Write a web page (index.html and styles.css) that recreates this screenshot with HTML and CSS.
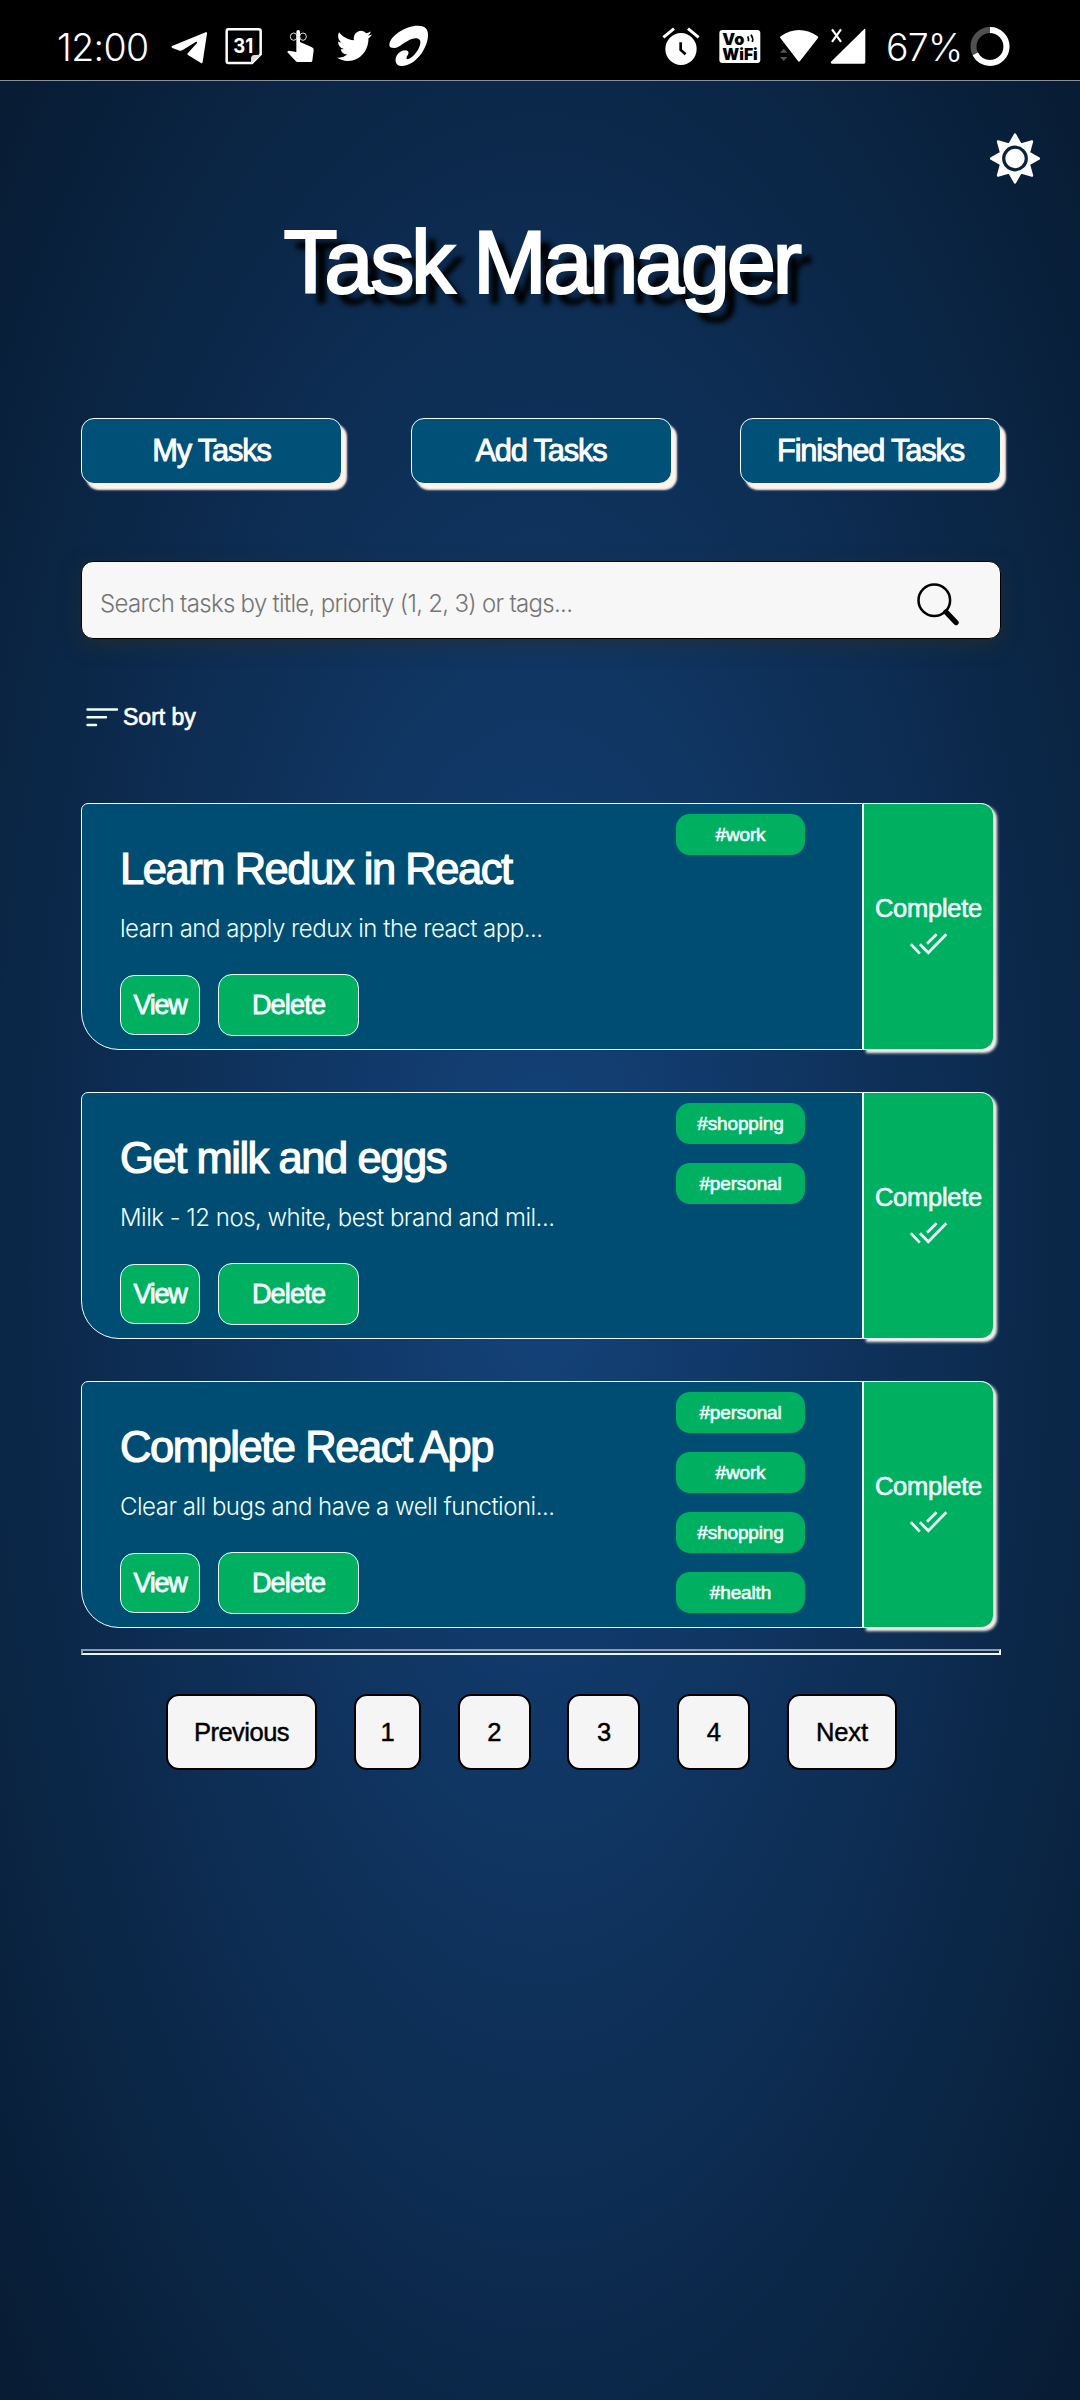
FILE: index.html
```html
<!DOCTYPE html>
<html lang="en">
<head>
<meta charset="utf-8">
<title>Task Manager</title>
<link rel="stylesheet" href="styles.css">
</head>
<body>
<svg width="0" height="0" class="defs" aria-hidden="true">
  <symbol id="done-all" viewBox="0 0 38 23"><path d="M.9 11.2 9.8 20.6M10 11.2l8.3 8.6L36.3 1.2M17 10.8l9.6-9.6" fill="none" stroke="#f0ffff" stroke-width="2.7"/></symbol>
</svg>

<div class="status">
  <div class="status-group">
    <span class="clock">12:00</span>
    <svg class="i-telegram" viewBox="32 12 111 130" width="37" height="43.3"><path d="M35 78 136 37q5-2 4 4l-13 85q-1 5-5 3L84 106q-5-3-1-7l27-30q3-6-4-3L66 91q-4 2-8 1L36 84q-5-3-1-6z" fill="#fff"/></svg>
    <svg class="i-calendar" viewBox="196 12 111 130" width="37" height="43.3"><path d="M206 28h91q6 0 6 6v69l-26 26h-71q-5 0-5-5V33q0-5 5-5z" fill="none" stroke="#fff" stroke-width="7.500"/><path d="M274 130v-14q0-11 11-11h19z" fill="#ddd"/><text x="221" y="100" class="cal-text" textLength="60" lengthAdjust="spacingAndGlyphs">31</text></svg>
    <svg class="i-hand" viewBox="378 12 86 130" width="28.7" height="43.3"><path d="M409 36q0-6 5.500-6t5.500 6v30l36 16q6 3 5 9l-4 31q-1 4-4 4h-40q-4 0-6-3l-22-23q-6-6 1-8l23 4z" fill="#fff"/><ellipse cx="401" cy="50" rx="10" ry="11" fill="none" stroke="#ddd" stroke-width="3"/><ellipse cx="429" cy="50" rx="10" ry="11" fill="none" stroke="#ddd" stroke-width="3"/></svg>
    <svg class="i-bird" viewBox="528 12 110 130" width="36.700" height="43.3"><path transform="translate(530 22) scale(4.42 4.65)" fill="#fff" d="M23.950 4.570a10 10 0 01-2.820.770 4.960 4.960 0 002.160-2.720c-.950.560-2 .960-3.130 1.180a4.920 4.920 0 00-8.380 4.480C7.690 8.100 4.070 6.130 1.640 3.160a4.820 4.820 0 00-.670 2.480c0 1.710.870 3.210 2.190 4.100a4.900 4.900 0 01-2.230-.620v.060a4.920 4.920 0 003.950 4.830 5 5 0 01-2.210.080 4.940 4.940 0 004.600 3.420A9.870 9.870 0 010 19.540a13.990 13.990 0 007.550 2.210c9.060 0 14-7.500 14-13.980 0-.210 0-.420-.020-.630a9.940 9.940 0 002.460-2.550z"/></svg>
    <svg class="i-swirl" viewBox="684 12 122 130" width="40.700" height="43.3"><path fill="#fff" d="M688 74C690 48 735 17 774 17c25 0 31 13 30 32-2 34-34 88-79 89-20 0-22-20-14-33 8-12 26-18 33-11 6 8-7 16-4 22 5 8 37-18 41-46 2-15-11-18-26-13-20 7-38 27-52 27-11 0-16-4-15-10z"/></svg>
  </div>
  <div class="status-group">
    <svg class="i-alarm" viewBox="38 12 114 130" width="38" height="43.3"><ellipse cx="95" cy="87" rx="47" ry="48" fill="#fff"/><path d="m42 52 32-26M116 26l32 26" stroke="#fff" stroke-width="9"/><path d="M94 67v23l15 13" fill="none" stroke="#000" stroke-width="8"/></svg>
    <svg class="i-vowifi" viewBox="210 12 126 130" width="42" height="43.3"><rect x="211" y="30" width="123" height="99" rx="9" fill="#fff"/><text x="220" y="75" class="vo-text" textLength="66" lengthAdjust="spacingAndGlyphs">Vo</text><text x="220" y="119" class="vo-text" textLength="106" lengthAdjust="spacingAndGlyphs">WiFi</text><path d="M296 49q4 8 2 15M306 44q8 11 4 22" fill="none" stroke="#000" stroke-width="5"/></svg>
    <svg class="i-wifi" viewBox="388 12 122 130" width="40.700" height="43.3"><path d="M392 54q-2-3 1-5 55-38 111 0 3 2 1 5l-54 69q-3 4-6 0z" fill="#fff"/><path d="m402 86 11 12h-22zM391 111h22l-11 12z" fill="#555"/></svg>
    <svg class="i-signal" viewBox="544 12 110 130" width="36.700" height="43.3"><path d="M547 125 647 27q3-2 3 2v98q0 4-4 4h-96q-6-1-3-6z" fill="#fff"/><path d="m550 28 27 38M577 28l-27 38" stroke="#fff" stroke-width="6.500"/></svg>
    <span class="battery">67%</span>
    <svg class="i-ring" viewBox="0 0 41 43.3" width="41" height="43.3"><circle cx="20" cy="22.500" r="16.500" fill="none" stroke="#505050" stroke-width="6"/><circle cx="20" cy="22.500" r="16.500" fill="none" stroke="#fff" stroke-width="6" pathLength="100" stroke-dasharray="67.500 100" transform="rotate(-90 20 22.500)"/></svg>
  </div>
</div>

<div class="theme-row">
  <svg viewBox="0 0 50 51" width="50" height="51"><path d="M49 25.500 38.900 31.200 42 42.500 30.700 39.400 25 49.500 19.300 39.400 8 42.500 11.100 31.200 1 25.500 11.100 19.800 8 8.500 19.300 11.600 25 1.500 30.700 11.600 42 8.500 38.900 19.800z" fill="#fff" stroke="#fff" stroke-width="2.400" stroke-linejoin="round"/><circle cx="25" cy="25.500" r="11.300" fill="#fff" stroke="#09223d" stroke-width="3.200"/></svg>
</div>

<main class="page">
  <h1 class="title">Task Manager</h1>

  <nav class="tabs">
    <button class="tab">My Tasks</button>
    <button class="tab">Add Tasks</button>
    <button class="tab">Finished Tasks</button>
  </nav>

  <div class="search">
    <span class="placeholder">Search tasks by title, priority (1, 2, 3) or tags...</span>
    <svg viewBox="0 0 44 44" width="44" height="44"><circle cx="18.300" cy="18.300" r="15.800" fill="none" stroke="#000" stroke-width="2.500"/><path d="m30 30 10 10.500" stroke="#000" stroke-width="5.400" stroke-linecap="round"/></svg>
  </div>

  <div class="sort">
    <svg viewBox="0 0 33 20" width="33" height="20"><path d="M1.500 2.500h29.500M1.500 10.200h18.500M1.500 18h8.500" stroke="#f0ffff" stroke-width="2.400" stroke-linecap="round"/></svg>
    <span>Sort by</span>
  </div>

  <section class="tasks">
    <article class="card">
      <div class="body">
        <div class="info">
          <h2>Learn Redux in React</h2>
          <p>learn and apply redux in the react app...</p>
          <div class="actions"><button class="view">View</button><button class="delete">Delete</button></div>
        </div>
        <div class="tags"><span>#work</span></div>
      </div>
      <button class="complete">Complete<svg width="38" height="23"><use href="#done-all"/></svg></button>
    </article>
    <article class="card">
      <div class="body">
        <div class="info">
          <h2>Get milk and eggs</h2>
          <p>Milk - 12 nos, white, best brand and mil...</p>
          <div class="actions"><button class="view">View</button><button class="delete">Delete</button></div>
        </div>
        <div class="tags"><span>#shopping</span><span>#personal</span></div>
      </div>
      <button class="complete">Complete<svg width="38" height="23"><use href="#done-all"/></svg></button>
    </article>
    <article class="card">
      <div class="body">
        <div class="info">
          <h2>Complete React App</h2>
          <p>Clear all bugs and have a well functioni...</p>
          <div class="actions"><button class="view">View</button><button class="delete">Delete</button></div>
        </div>
        <div class="tags"><span>#personal</span><span>#work</span><span>#shopping</span><span>#health</span></div>
      </div>
      <button class="complete">Complete<svg width="38" height="23"><use href="#done-all"/></svg></button>
    </article>
  </section>

  <hr class="rule">

  <div class="pager">
    <button class="prev">Previous</button>
    <button class="first">1</button>
    <button>2</button>
    <button>3</button>
    <button>4</button>
    <button class="next">Next</button>
  </div>
</main>
</body>
</html>
```
FILE: styles.css
```css
* { box-sizing: border-box; }

body {
  margin: 0;
  width: 1080px;
  height: 2400px;
  overflow: hidden;
  background: radial-gradient(ellipse farthest-corner at 540px 1240px, #14437b, #071a30);
  color: #fff;
  font-family: "Liberation Sans", Arial, sans-serif;
}

.defs { display: block; }

button {
  margin: 0;
  padding: 0;
  font: inherit;
  letter-spacing: inherit;
  color: inherit;
  background: none;
  border: 0;
}

/* Status bar */
.status {
  display: flex;
  justify-content: space-between;
  height: 81px;
  padding: 24px 69px 0 56px;
  background: #000;
  border-bottom: 1px solid #8492a3;
}
.status-group { display: flex; height: 43px; }
.status-group svg { display: block; flex: none; }
.clock, .battery {
  font: 300 37.5px/44px "Inter", sans-serif;
  flex: none;
  white-space: nowrap;
}
.clock { width: 114.7px; letter-spacing: -.6px; padding: 2px 0 0 1px; }
.battery { width: 86px; letter-spacing: -.8px; padding: 2px 0 0 2px; }
.i-calendar { margin-left: 17.6px; }
.i-hand { margin-left: 23.7px; }
.i-bird { margin-left: 21.3px; }
.i-swirl { margin-left: 15.3px; }
.i-vowifi { margin-left: 19.3px; }
.i-wifi { margin-left: 17.3px; }
.i-signal { margin: 0 17px 0 11px; }
.cal-text { font: 700 60px "Inter", sans-serif; fill: #fff; }
.vo-text { font: 900 48px "Inter", sans-serif; fill: #000; }

.theme-row {
  display: flex;
  justify-content: flex-end;
  height: 103px;
  padding: 52px 40px 0 0;
}

/* Page */
.page { padding: 28px 79px 0 81px; }

.title {
  margin: 0;
  text-align: center;
  font-weight: 400;
  font-size: 88.5px;
  line-height: 102px;
  height: 100px;
  letter-spacing: -3.4px;
  white-space: nowrap;
  -webkit-text-stroke: 2.2px #fff;
  text-shadow: 11px 11px 5px #000;
}

.tabs {
  display: flex;
  justify-content: space-between;
  margin-top: 106px;
}
.tab {
  width: 261px;
  height: 65.5px;
  border: 1px solid #f0ffff;
  border-radius: 13px;
  background: #005078;
  box-shadow: 5px 6px 2px #fff3ec;
  font-size: 30.8px;
  letter-spacing: -1.15px;
  -webkit-text-stroke: .9px #fff;
}

.search {
  display: flex;
  align-items: center;
  justify-content: space-between;
  height: 78px;
  margin-top: 77.5px;
  padding: 0 40px 0 18px;
  border: 1px solid #000;
  border-radius: 12px;
  background: #f7f7f7;
  box-shadow: 0 6px 20px rgba(44, 46, 40, .6);
}
.placeholder {
  padding-top: 7px;
  font: 300 24px/30px "Inter", sans-serif;
  letter-spacing: -.7px;
  color: #757575;
}
.search svg { margin-top: 8px; }

.sort {
  display: flex;
  align-items: center;
  gap: 4px;
  margin: 63px 0 0 5px;
  font-size: 23px;
  line-height: 30px;
  -webkit-text-stroke: .7px #fff;
}

/* Task cards */
.tasks {
  display: flex;
  flex-direction: column;
  gap: 42.5px;
  margin-top: 71px;
}
.card { display: flex; height: 246.5px; width: 913px; }
.body {
  display: flex;
  justify-content: space-between;
  width: 782px;
  padding: 0 57px 0 38px;
  background: #004d74;
  border: 1px solid #f0ffff;
  border-radius: 7px 0 0 38px;
}
.info { padding-top: 38.5px; }
.info h2 {
  margin: 0;
  font-weight: 400;
  font-size: 43.5px;
  line-height: 52px;
  letter-spacing: -1.45px;
  white-space: nowrap;
  -webkit-text-stroke: 1.2px #fff;
}
.info p {
  margin: 19px 0 0;
  font: 300 24px/30px "Inter", sans-serif;
  letter-spacing: -.5px;
  white-space: nowrap;
  color: #f0ffff;
}
.actions {
  display: flex;
  align-items: center;
  gap: 18px;
  margin-top: 30.5px;
  font-size: 27px;
  letter-spacing: -.8px;
  -webkit-text-stroke: .8px #f0ffff;
}
.view, .delete {
  background: #00b061;
  border: 1px solid #f0ffff;
  border-radius: 14px;
}
.view { width: 80px; height: 60px; letter-spacing: -1.3px; }
.delete { width: 141px; height: 62px; }

.tags {
  display: flex;
  flex-direction: column;
  gap: 19px;
  padding-top: 10px;
}
.tags span {
  width: 129px;
  height: 41px;
  border-radius: 14px;
  background: #00b061;
  text-align: center;
  font-size: 19px;
  line-height: 42px;
  letter-spacing: -.15px;
  color: #f0ffff;
  -webkit-text-stroke: .6px #f0ffff;
}

.complete {
  display: flex;
  flex-direction: column;
  align-items: center;
  width: 131px;
  padding-top: 89px;
  border: 1px solid #f0ffff;
  border-right-color: #c5efe0;
  border-radius: 0 13px 13px 0;
  background: #00b061;
  box-shadow: 3px 3px 3px #fff8ee;
  font-size: 25.5px;
  line-height: 30px;
  letter-spacing: -.25px;
  color: #f0ffff;
  -webkit-text-stroke: .6px #f0ffff;
}
.complete svg { margin-top: 10px; }

.rule {
  height: 6px;
  margin: 21.5px 0 0;
  border: 2px solid;
  border-color: #8d9bb0 #edf6fb #edf6fb #8d9bb0;
}

/* Pagination */
.pager {
  display: flex;
  gap: 36.8px;
  margin-top: 39px;
  padding-left: 85px;
  color: #000;
}
.pager button {
  width: 73px;
  height: 76px;
  border: 2px solid #000;
  border-radius: 13px;
  background: #f5f5f5;
  font-size: 25.5px;
  letter-spacing: -.5px;
  -webkit-text-stroke: .45px #000;
}
.pager .prev { width: 151px; }
.pager .first { width: 67px; }
.pager .next { width: 110px; letter-spacing: -.1px; }
```
